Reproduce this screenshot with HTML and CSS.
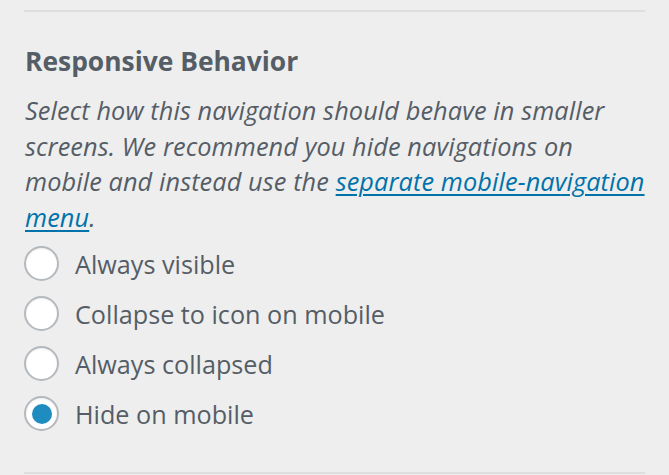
FILE: index.html
```html
<!DOCTYPE html>
<html>
<head>
<meta charset="utf-8">
<link rel="stylesheet" href="styles.css">
</head>
<body>
<div class="panel">
  <hr class="sep">
  <h2 class="title">Responsive Behavior</h2>
  <p class="desc">Select how this navigation should behave in smaller<br>screens. We recommend you hide navigations on<br>mobile and instead use the <a href="#">separate mobile-navigation<br>menu</a>.</p>
  <ul class="options">
    <li class="opt"><span class="radio"></span><span class="label">Always visible</span></li>
    <li class="opt"><span class="radio"></span><span class="label">Collapse to icon on mobile</span></li>
    <li class="opt"><span class="radio"></span><span class="label">Always collapsed</span></li>
    <li class="opt"><span class="radio checked"></span><span class="label">Hide on mobile</span></li>
  </ul>
  <hr class="sep bottom">
</div>
</body>
</html>
```
FILE: styles.css
```css
html, body {
  margin: 0;
  padding: 0;
  background: #eeeeee;
}
body {
  width: 669px;
  height: 475px;
  overflow: hidden;
}
.panel {
  padding: 10px 24px 0 24px;
  color: #555d66;
}
.sep {
  margin: 0;
  border: 0;
  height: 2px;
  background: #dedede;
}
.title {
  margin: 33px 0 0 1px;
  font-family: "Open Sans", sans-serif;
  font-weight: 700;
  font-size: 26.4px;
  line-height: 32px;
  color: #555d66;
  white-space: nowrap;
}
.desc {
  margin: 16px 0 0 1px;
  font-family: "Open Sans", sans-serif;
  font-style: italic;
  font-size: 25.3px;
  letter-spacing: 0.1px;
  line-height: 35.5px;
  width: 644px;
  white-space: nowrap;
}
.desc a {
  color: #0073aa;
  text-decoration: underline;
  text-underline-offset: 3px;
  text-decoration-thickness: 2px;
}
.options {
  list-style: none;
  margin: 3.5px 0 0 0;
  padding: 0;
}
.opt {
  display: flex;
  align-items: center;
  height: 50px;
}
.radio {
  box-sizing: border-box;
  flex: none;
  width: 35px;
  height: 35px;
  border: 2px solid #b4b9be;
  border-radius: 50%;
  background: #fff;
  display: flex;
  align-items: center;
  justify-content: center;
  box-shadow: inset 0 1px 2px rgba(0,0,0,0.07);
}
.radio.checked::after {
  content: "";
  width: 20px;
  height: 20px;
  border-radius: 50%;
  background: #1e8cbe;
}
.label {
  margin-left: 16px;
  font-family: "Open Sans", sans-serif;
  font-size: 25.2px;
  color: #555d66;
  white-space: nowrap;
}
.bottom {
  margin-top: 33px;
}
```
